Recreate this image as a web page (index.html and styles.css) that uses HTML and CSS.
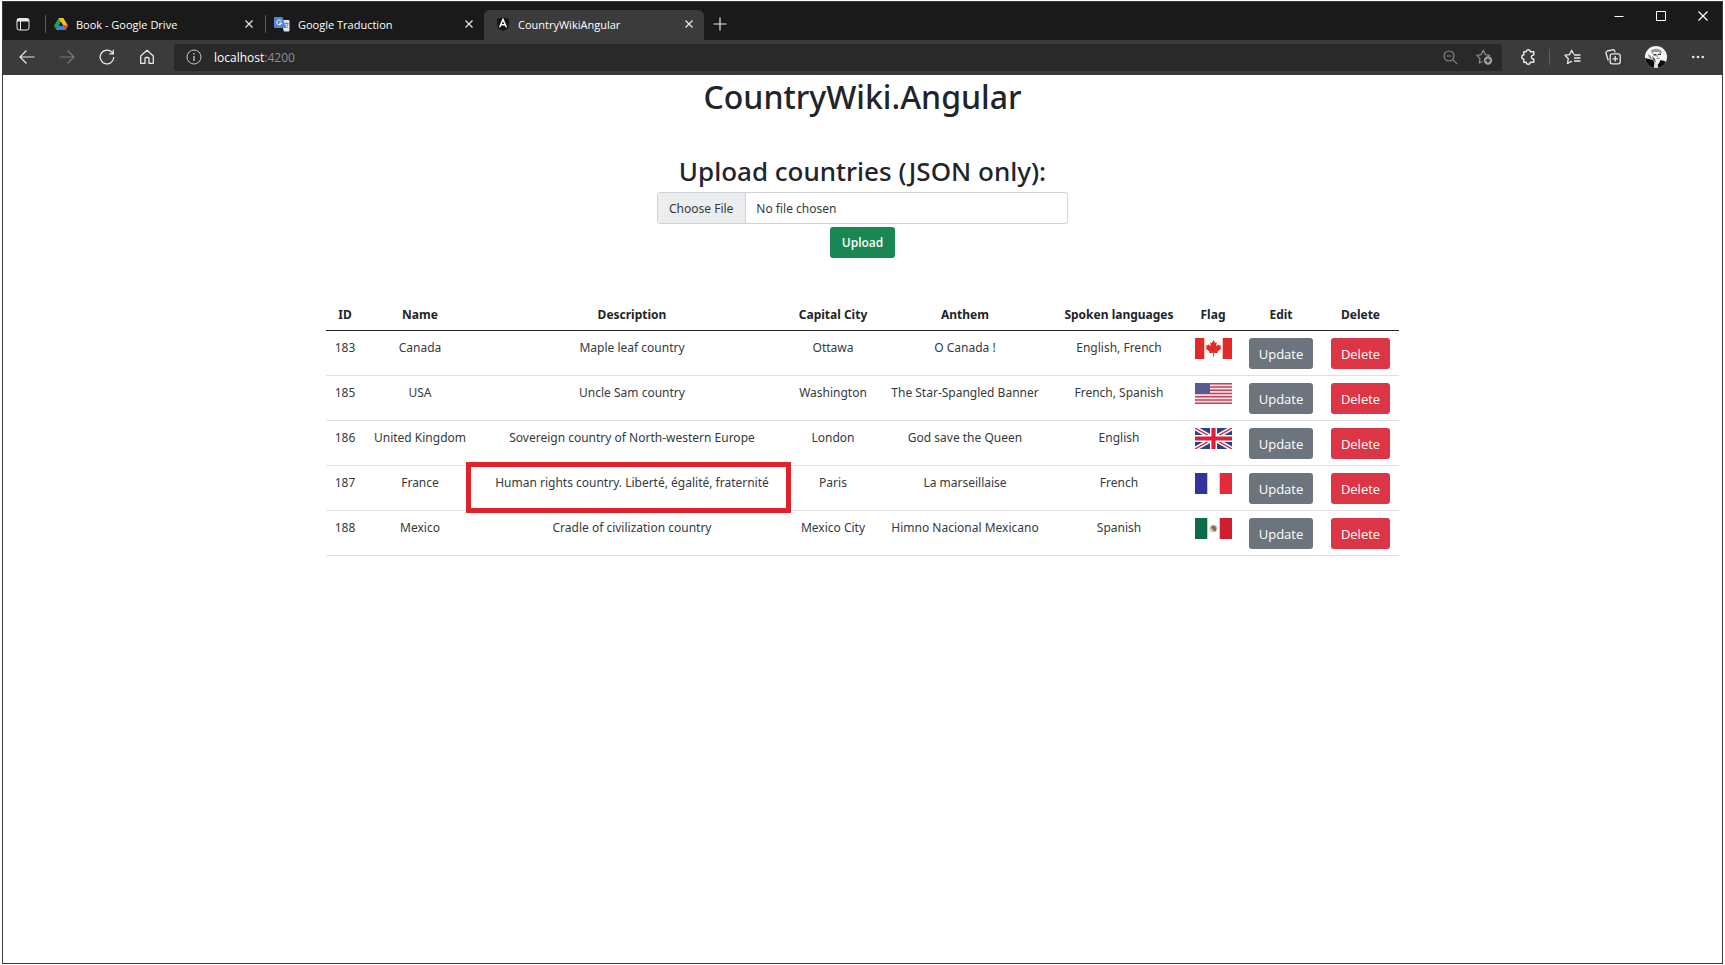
FILE: index.html
```html
<!DOCTYPE html>
<html lang="en">
<head>
<meta charset="utf-8">
<title>CountryWikiAngular</title>
<link rel="stylesheet" href="styles.css">
</head>
<body>
<div class="window">
  <header class="chrome">
    <div class="tabstrip">
      <button class="icon-btn tab-actions" aria-label="Tab actions">
        <svg width="14" height="14" viewBox="0 0 14 14" fill="none" stroke="#e8e8e8"><rect x="1" y="1.500" width="12" height="11.500" rx="2"/><path d="M1 2.500h12M1 3.800h12" stroke-width="1.600"/><path d="M4.500 4v9"/></svg>
      </button>
      <div class="tab">
        <svg width="14" height="14" viewBox="0 0 14 14"><path d="M4.700 1h4.600L4.700 9.300 2.500 13 0 8.800z" fill="#21a355"/><path d="M4.700 1h4.600L14 8.800H9.200z" fill="#fbc116"/><path d="M4.600 8.800H14L11.600 13H2.400z" fill="#4a7fe6"/><path d="M14 8.800 11.600 13 9.200 8.800z" fill="#e5432f"/><path d="M7 4.900 9.200 8.800H4.700z" fill="#1b1b1b"/></svg>
        <span class="tab-title">Book - Google Drive</span>
        <button class="icon-btn" aria-label="Close tab"><svg width="10" height="10" viewBox="0 0 10 10" stroke="#e8e8e8" stroke-width="1.200"><path d="M1.500 1.500l7 7M8.500 1.500l-7 7"/></svg></button>
      </div>
      <div class="tab">
        <svg width="16" height="16" viewBox="0 0 16 16"><path d="M6 4h8.500a1 1 0 0 1 1 1v9.500a1 1 0 0 1-1 1H10z" fill="#dfe3ea"/><path d="M1 1h7.500l3.500 11H1a1 1 0 0 1-1-1V2a1 1 0 0 1 1-1z" fill="#5484d8"/><path d="M7.300 5.300A2.400 2.400 0 1 0 7.500 7H5.400" fill="none" stroke="#fff"/><path d="M10.500 7.500h4M12.500 6.500v1M14 7.500c-.3 2-1.500 3.500-2.800 4.300M11.300 8.800c.6 1.500 1.600 2.400 2.700 3" fill="none" stroke="#6d7a90" stroke-width=".9"/></svg>
        <span class="tab-title">Google Traduction</span>
        <button class="icon-btn" aria-label="Close tab"><svg width="10" height="10" viewBox="0 0 10 10" stroke="#e8e8e8" stroke-width="1.200"><path d="M1.500 1.500l7 7M8.500 1.500l-7 7"/></svg></button>
      </div>
      <div class="tab tab-active">
        <svg width="14" height="14" viewBox="0 0 14 14"><path d="M7 0l6.300 2.200-1 8.700L7 14l-5.300-3.100-1-8.700z" fill="#161616"/><path d="M3.600 10.300 7 2.500l3.400 7.800M5 7.800h4" fill="none" stroke="#fff" stroke-width="1.500"/></svg>
        <span class="tab-title">CountryWikiAngular</span>
        <button class="icon-btn" aria-label="Close tab"><svg width="10" height="10" viewBox="0 0 10 10" stroke="#e8e8e8" stroke-width="1.200"><path d="M1.500 1.500l7 7M8.500 1.500l-7 7"/></svg></button>
      </div>
      <button class="icon-btn new-tab" aria-label="New tab"><svg width="14" height="14" viewBox="0 0 14 14" stroke="#e8e8e8" stroke-width="1.200"><path d="M7 .5v13M.5 7h13"/></svg></button>
      <div class="window-controls">
        <button class="icon-btn" aria-label="Minimize"><svg width="10" height="10" viewBox="0 0 10 10" stroke="#fff"><path d="M.5 5.500h9"/></svg></button>
        <button class="icon-btn" aria-label="Maximize"><svg width="10" height="10" viewBox="0 0 10 10" stroke="#fff" fill="none"><path d="M.5.500h9v9h-9z"/></svg></button>
        <button class="icon-btn" aria-label="Close"><svg width="10" height="10" viewBox="0 0 10 10" stroke="#fff" stroke-width="1.200"><path d="M.5.500l9 9M9.500.500l-9 9"/></svg></button>
      </div>
    </div>
    <div class="toolbar">
      <nav class="nav-buttons" aria-label="Browser">
        <button class="icon-btn" aria-label="Back"><svg width="16" height="16" viewBox="0 0 16 16" fill="none" stroke="#e8e8e8" stroke-width="1.200"><path d="M15.500 8H1M7.500 1.500 1 8l6.500 6.500"/></svg></button>
        <button class="icon-btn" aria-label="Forward"><svg width="16" height="16" viewBox="0 0 16 16" fill="none" stroke="#777" stroke-width="1.200"><path d="M.5 8H15M8.500 1.500 15 8l-6.500 6.500"/></svg></button>
        <button class="icon-btn" aria-label="Refresh"><svg width="16" height="16" viewBox="0 0 16 16" fill="none" stroke="#e8e8e8" stroke-width="1.300"><path d="M14.800 8A6.800 6.800 0 1 1 13 3.400l1.300 1.400M14.300.8v4.100h-4.100"/></svg></button>
        <button class="icon-btn" aria-label="Home"><svg width="16" height="16" viewBox="0 0 16 16" fill="none" stroke="#e8e8e8" stroke-width="1.300" stroke-linejoin="round"><path d="M1.700 7 8 1.200 14.300 7v7.300H10V9.500a1 1 0 0 0-1-1H7a1 1 0 0 0-1 1v4.800H1.700z"/></svg></button>
      </nav>
      <div class="address">
        <svg width="16" height="16" viewBox="0 0 16 16" fill="none" stroke="#c8c8c8"><circle cx="8" cy="8" r="7"/><path d="M8 7v5M8 4v1.500" stroke-width="1.300"/></svg>
        <span class="url">localhost<span class="port">:4200</span></span>
        <button class="icon-btn" aria-label="Zoom out"><svg width="15" height="15" viewBox="0 0 15 15" fill="none" stroke="#8a8a8a" stroke-width="1.100"><circle cx="6" cy="6" r="5"/><path d="M9.700 9.700l4.500 4.500M3.700 6h4.600"/></svg></button>
        <button class="icon-btn" aria-label="Add to favorites"><svg width="17" height="16" viewBox="0 0 17 16" fill="none" stroke="#8a8a8a" stroke-width="1.300" stroke-linejoin="round"><path d="M6.500 12.500 3.300 14l.7-4.400L.8 6.300l4.500-.7 2-4.300 2 4.300 4.500.7-1.300 1.300"/><circle cx="12" cy="11.500" r="4.200" fill="#a0a0a0" stroke="none"/><path d="M12 9.300v4.400M9.800 11.500h4.400" stroke="#292929"/></svg></button>
      </div>
      <button class="icon-btn ext" aria-label="Extensions"><svg width="16" height="16" viewBox="0 0 16 16" fill="none" stroke="#e8e8e8" stroke-width="1.400" stroke-linejoin="round"><path d="M3.800 2.800h2.400a2 2 0 0 1 4 0h3.600v3.300a2 2 0 1 0 0 3.900v3.300h-3.600a2 2 0 0 1-4 0H3.800v-3.300a2 2 0 1 1 0-4z"/></svg></button>
      <span class="divider"></span>
      <button class="icon-btn" aria-label="Favorites"><svg width="17" height="16" viewBox="0 0 17 16" fill="none" stroke="#e8e8e8" stroke-width="1.300" stroke-linejoin="round"><path d="M8 12.200 3.500 14.500l.8-4.800L1 6.200l4.500-.6 2.200-4.200 2 3.800M10 6h6.500M10 9h6.500M10 12h6.500"/></svg></button>
      <button class="icon-btn" aria-label="Collections"><svg width="16" height="16" viewBox="0 0 16 16" fill="none" stroke="#e8e8e8" stroke-width="1.300"><rect x="5.200" y="4.800" width="10" height="10" rx="2"/><path d="M10.200 7v5.500M7.500 9.800H13M3.300 11.500 1 4.300A2 2 0 0 1 2.300 2L7.500.8a2 2 0 0 1 2.300 1.300l.4 1.200"/></svg></button>
      <button class="icon-btn avatar" aria-label="Profile"><svg width="22" height="22" viewBox="0 0 22 22"><defs><clipPath id="face"><circle cx="11" cy="11" r="11"/></clipPath></defs><g clip-path="url(#face)"><path d="M0 0h22v22H0z" fill="#f4f4f4"/><path d="M0 12l4 1 4 1 2 4 1.500 1 2-1 2-4 4 1 2.500 2v5H0z" fill="#0c0c0c"/><path d="M3 8c0 2 1 4 2 5l2 1-1-4zM6 5c2-3 9-3 11 1l-1 2-2-2-5 0-2 2z" fill="#999"/><path d="M9 17l2 1.500 2-1.500v5H9z" fill="#ddd"/><path d="M8.500 8.800h3M13 8.400h3" stroke="#333" stroke-width="1.400"/><path d="M11.500 12.500l3-.3M12.200 9v2" stroke="#777" fill="none"/><path d="M7 10l1 4 3 3-1-4z" fill="#555"/></g></svg></button>
      <button class="icon-btn" aria-label="Settings and more"><svg width="14" height="4" viewBox="0 0 14 4" fill="#e8e8e8"><circle cx="2.200" cy="2" r="1.300"/><circle cx="7" cy="2" r="1.300"/><circle cx="11.800" cy="2" r="1.300"/></svg></button>
    </div>
  </header>

  <main class="page">
    <h1>CountryWiki.Angular</h1>
    <form class="upload">
      <h2><label for="file">Upload countries (JSON only):</label></h2>
      <input class="file" id="file" type="file">
      <button class="btn btn-success" type="button">Upload</button>
    </form>
    <table class="countries">
      <colgroup><col class="c-id"><col class="c-name"><col class="c-desc"><col class="c-capital"><col class="c-anthem"><col class="c-lang"><col class="c-flag"><col class="c-edit"><col class="c-delete"></colgroup>
      <thead>
        <tr><th>ID</th><th>Name</th><th>Description</th><th>Capital City</th><th>Anthem</th><th>Spoken languages</th><th>Flag</th><th>Edit</th><th>Delete</th></tr>
      </thead>
      <tbody>
        <tr><td>183</td><td>Canada</td><td>Maple leaf country</td><td>Ottawa</td><td>O Canada !</td><td>English, French</td>
          <td><svg class="flag" role="img" aria-label="Canada" viewBox="0 0 37 21"><path d="M0 0h37v21H0z" fill="#fff"/><path d="M0 0h9.300v21H0zM27.700 0H37v21h-9.300z" fill="#e02a27"/><path d="M18.500 2l1.700 3 1.600-.8-.6 4 2.200-2 .5 1.300 2.300-.3-.8 2.400 1 .7-4 3.400.4 1.500-3.900-.5v4h-.8v-4l-3.900.5.400-1.500-4-3.400 1-.7-.8-2.400 2.300.3.500-1.300 2.200 2-.6-4 1.600.8z" fill="#e02a27"/></svg></td>
          <td><button class="btn btn-secondary" type="button">Update</button></td><td><button class="btn btn-danger" type="button">Delete</button></td></tr>
        <tr><td>185</td><td>USA</td><td>Uncle Sam country</td><td>Washington</td><td>The Star-Spangled Banner</td><td>French, Spanish</td>
          <td><svg class="flag" role="img" aria-label="USA" viewBox="0 0 37 21"><path d="M0 0h37v21H0z" fill="#f4e4e8"/><path d="M0 .8h37M0 4h37M0 7.300h37M0 10.500h37M0 13.700h37M0 17h37M0 20.200h37" stroke="#c6405a" stroke-width="1.600"/><path d="M0 0h15v10.500H0z" fill="#5a5a8e"/></svg></td>
          <td><button class="btn btn-secondary" type="button">Update</button></td><td><button class="btn btn-danger" type="button">Delete</button></td></tr>
        <tr><td>186</td><td>United Kingdom</td><td>Sovereign country of North-western Europe</td><td>London</td><td>God save the Queen</td><td>English</td>
          <td><svg class="flag" role="img" aria-label="United Kingdom" viewBox="0 0 37 21"><path d="M0 0h37v21H0z" fill="#2b4382"/><path d="M0 0l37 21M37 0 0 21" stroke="#fff" stroke-width="4.400"/><path d="M0 0l37 21M37 0 0 21" stroke="#d8263c" stroke-width="1.400"/><path d="M18.500 0v21M0 10.500h37" stroke="#fff" stroke-width="7"/><path d="M18.500 0v21M0 10.500h37" stroke="#d8203a" stroke-width="4.200"/></svg></td>
          <td><button class="btn btn-secondary" type="button">Update</button></td><td><button class="btn btn-danger" type="button">Delete</button></td></tr>
        <tr><td>187</td><td>France</td><td class="highlight">Human rights country. Liberté, égalité, fraternité</td><td>Paris</td><td>La marseillaise</td><td>French</td>
          <td><svg class="flag" role="img" aria-label="France" viewBox="0 0 37 21"><path d="M0 0h37v21H0z" fill="#fff"/><path d="M0 0h12.300v21H0z" fill="#33349a"/><path d="M24.700 0H37v21H24.700z" fill="#e32b3b"/></svg></td>
          <td><button class="btn btn-secondary" type="button">Update</button></td><td><button class="btn btn-danger" type="button">Delete</button></td></tr>
        <tr><td>188</td><td>Mexico</td><td>Cradle of civilization country</td><td>Mexico City</td><td>Himno Nacional Mexicano</td><td>Spanish</td>
          <td><svg class="flag" role="img" aria-label="Mexico" viewBox="0 0 37 21"><path d="M0 0h37v21H0z" fill="#fff"/><path d="M0 0h12.300v21H0z" fill="#0e6b47"/><path d="M24.700 0H37v21H24.700z" fill="#cf1f2e"/><circle cx="18.500" cy="10.500" r="3.800" fill="#c9c3ae"/><path d="M16 9.500c1-2.500 4-2.500 5 0s-.5 3.500-1.500 4z" fill="#8a6a4c"/></svg></td>
          <td><button class="btn btn-secondary" type="button">Update</button></td><td><button class="btn btn-danger" type="button">Delete</button></td></tr>
      </tbody>
    </table>
  </main>
</div>
</body>
</html>
```
FILE: styles.css
```css
* { box-sizing: border-box; }

body {
  margin: 0;
  padding: 1px 2px 1px 2px;
  min-height: 100vh;
  display: flex;
  background: #fff;
  color: #212529;
  font-family: "Noto Sans", "Open Sans", sans-serif;
  font-size: 12px;
}

.window {
  flex: 1;
  display: flex;
  flex-direction: column;
  border: 1px solid #3a3a3a;
}

/* Browser chrome */
.chrome {
  background: #3b3b3b;
  color: #fff;
  font-family: "Open Sans", "Noto Sans", sans-serif;
}

.icon-btn {
  display: inline-flex;
  align-items: center;
  justify-content: center;
  padding: 0;
  border: 0;
  background: none;
}

.icon-btn svg, .tab svg, .address svg { flex: none; display: block; }

.tabstrip {
  display: flex;
  height: 38px;
  padding-top: 8px;
  background: #1a1a1a;
}

.tab-actions { width: 41px; padding: 0 1px 2px 0; }

.tab {
  display: flex;
  align-items: center;
  gap: 8px;
  width: 220px;
  padding: 0 10px 2px 12px;
  font-size: 11px;
}

.tab:not(.tab-active)::before {
  content: "";
  width: 1px;
  height: 18px;
  margin-left: -11px;
  background: #5a5a5a;
}

.tab-title { flex: 1; white-space: nowrap; }

.tab-active { background: #3b3b3b; border-radius: 6px 6px 0 0; }

.new-tab { width: 32px; padding-bottom: 2px; }

.window-controls {
  display: flex;
  gap: 32px;
  align-items: flex-start;
  margin-left: auto;
  padding: 1px 14px 0 0;
}

.toolbar {
  display: flex;
  align-items: center;
  height: 35px;
  padding: 0 17px 1px 16px;
}

.nav-buttons { display: flex; gap: 24px; margin-right: 19px; }

.address {
  flex: 1;
  display: flex;
  align-items: center;
  gap: 18px;
  height: 27px;
  padding: 0 9px 0 12px;
  border-radius: 3px;
  background: #292929;
}

.url { flex: 1; margin-left: -6px; font-size: 12px; font-weight: 500; }
.port { color: #909090; }

.ext { margin: 0 13px 0 18px; }
.divider { width: 1px; height: 16px; margin-right: 14px; background: #606060; }
.toolbar > .icon-btn + .icon-btn { margin-left: 24px; }

/* Page */
.page {
  display: flex;
  flex-direction: column;
  align-items: center;
}

h1, h2 { margin: 0; font-weight: 500; text-align: center; }
h1 { font-size: 32px; line-height: 44px; }

.upload {
  display: flex;
  flex-direction: column;
  align-items: center;
  margin-top: 34px;
}

h2 { margin-bottom: 3px; font-size: 26px; line-height: 36px; }

.file {
  width: 411px;
  height: 32px;
  font: inherit;
  color: #343a40;
  border: 1px solid #ced4da;
  border-radius: 3px;
  line-height: 31px;
}

.file::file-selector-button {
  height: 30px;
  margin: 0 10px 0 0;
  padding: 0 12px 0 11px;
  border: 0;
  border-right: 1px solid #ced4da;
  background: #ebedef;
  color: #343a40;
  font: inherit;
}

.btn {
  height: 31px;
  padding: 0 10px;
  border: 0;
  border-radius: 3px;
  color: #fff;
  font-family: "Open Sans", "Noto Sans", sans-serif;
  font-size: 13px;
}

.btn-success {
  margin-top: 3px;
  padding: 0 12px;
  background: #198754;
  font-size: 12px;
  font-weight: 600;
}
.btn-secondary { background: #6c757d; }
.btn-danger { background: #dc3545; }

.countries {
  width: 100%;
  max-width: 1073px;
  margin-top: 40px;
  table-layout: fixed;
  border-collapse: collapse;
  text-align: center;
  line-height: 20px;
}

.c-id { width: 38px; }
.c-name { width: 112px; }
.c-desc { width: 312px; }
.c-capital { width: 90px; }
.c-anthem { width: 174px; }
.c-lang { width: 134px; }
.c-flag { width: 54px; }
.c-edit { width: 82px; }
.c-delete { width: 77px; }

.countries th, .countries td {
  padding: 7px 0 6px;
  white-space: nowrap;
  vertical-align: top;
}

.countries th { padding: 7px 0 5px; font-weight: 700; border-bottom: 1px solid #212529; }
.countries td { border-bottom: 1px solid #dee2e6; color: #343a40; }
.countries .btn { display: block; margin: 0 auto; }
.flag { display: block; width: 37px; height: 21px; margin: 0 auto; }

.highlight { position: relative; }

.highlight::after {
  content: "";
  position: absolute;
  inset: -4px -3px -3px -10px;
  border: 5px solid #df2329;
}
```
